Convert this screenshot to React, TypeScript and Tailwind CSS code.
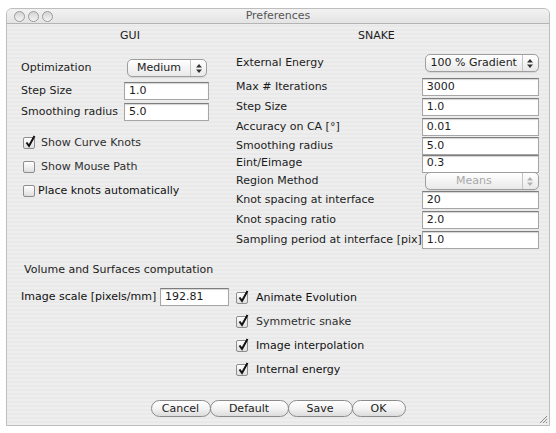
import React from "react";

const font = "font-['DejaVu_Sans','Liberation_Sans',sans-serif]";

function Arrows({ dim }: { dim?: boolean }) {
  const c = dim ? "#b0b0b0" : "#333";
  return (
    <svg width="6" height="9" viewBox="0 0 6 9">
      <path d="M3 0 L6 3.5 L0 3.5 Z" fill={c} />
      <path d="M3 9 L6 5.5 L0 5.5 Z" fill={c} />
    </svg>
  );
}

function Popup({ value, width, dim }: { value: string; width: string; dim?: boolean }) {
  return (
    <div
      className={`${width} h-[18px] flex items-center rounded-[5px] border border-[#9e9e9e] bg-gradient-to-b from-white to-[#e9e9e9] shadow-[0_1px_0_#d8d8d8]`}
    >
      <span className={`flex-1 text-center text-[11px] ${dim ? "text-[#a8a8a8]" : "text-[#1c1c1c]"}`}>{value}</span>
      <span className="w-[16px] h-full flex items-center justify-center border-l border-[#c4c4c4]">
        <Arrows dim={dim} />
      </span>
    </div>
  );
}

function Field({ value, width }: { value: string; width: string }) {
  return (
    <div
      className={`${width} h-[18px] shrink-0 flex items-center bg-white border border-[#a6a6a6] border-t-[#7d7d7d] pl-[4px] text-[11px] text-[#1c1c1c] shadow-[inset_0_1px_1px_#d4d4d4]`}
    >
      {value}
    </div>
  );
}

function Box({ checked }: { checked?: boolean }) {
  return (
    <span className="relative w-[12px] h-[12px] rounded-[2px] border border-[#8d8d8d] bg-gradient-to-b from-white to-[#dedede] shrink-0">
      {checked && (
        <svg className="absolute left-[1px] top-[-3px]" width="11" height="13" viewBox="0 0 11 13">
          <path d="M1.5 7.5 L4 11 L9.5 1" stroke="#111" strokeWidth="2" fill="none" />
        </svg>
      )}
    </span>
  );
}

function Check({ label, checked, gap, bold }: { label: string; checked?: boolean; gap: string; bold?: boolean }) {
  return (
    <div className={`h-[18px] flex items-center ${gap}`}>
      <Box checked={checked} />
      <span className={`text-[11px] ${bold ? "text-[#111]" : "text-[#2e2e2e]"}`}>{label}</span>
    </div>
  );
}

function Row({ label, children, className }: { label: string; children: React.ReactNode; className?: string }) {
  return (
    <div className={`flex items-center justify-between ${className ?? ""}`}>
      <span className="text-[11px] text-[#1c1c1c] whitespace-nowrap">{label}</span>
      {children}
    </div>
  );
}

// label, value, row height
const snakeRows: [string, string, string][] = [
  ["Max # Iterations", "3000", "h-[20px]"],
  ["Step Size", "1.0", "h-[20px]"],
  ["Accuracy on CA [°]", "0.01", "h-[20px]"],
  ["Smoothing radius", "5.0", "h-[18px]"],
  ["Eint/Eimage", "0.3", "h-[17px]"],
];

const knotRows: [string, string][] = [
  ["Knot spacing at interface", "20"],
  ["Knot spacing ratio", "2.0"],
  ["Sampling period at interface [pix]", "1.0"],
];

export default function App() {
  return (
    <div className={`w-[556px] h-[433px] bg-white pt-[8px] pl-[6px] ${font}`}>
      <div className="relative w-[544px] h-[418px] flex flex-col border border-[#bdbdbd] rounded-t-[6px] overflow-hidden bg-[repeating-linear-gradient(0deg,#eeeeee_0px,#eeeeee_2px,#e9e9e9_2px,#e9e9e9_4px)]">
        {/* title bar */}
        <div className="relative h-[15px] flex items-center justify-center bg-gradient-to-b from-[#f2f2f2] to-[#e4e4e4] border-b border-[#b4b4b4]">
          <div className="absolute left-[7px] top-[2px] flex gap-[3px]">
            {[0, 1, 2].map((i) => (
              <span
                key={i}
                className="w-[11px] h-[11px] rounded-full border border-[#9a9a9a] bg-gradient-to-b from-[#d4d4d4] to-[#f4f4f4]"
              />
            ))}
          </div>
          <span className="text-[11px] text-[#555]">Preferences</span>
        </div>

        {/* top section */}
        <div className="grid grid-cols-[222px_1fr]">
          <div className="flex flex-col pl-[14px]">
            <div className="h-[24px] flex items-center justify-center pl-[10px] text-[11px] text-[#1c1c1c]">GUI</div>
            <Row label="Optimization" className="mt-[11px] h-[18px] pr-[22px]">
              <Popup value="Medium" width="w-[80px]" />
            </Row>
            <div className="mt-[5px] h-[18px] flex items-center">
              <span className="w-[103px] text-[11px] text-[#1c1c1c]">Step Size</span>
              <Field value="1.0" width="w-[85px]" />
            </div>
            <div className="mt-[3px] h-[18px] flex items-center">
              <span className="w-[103px] text-[11px] text-[#1c1c1c]">Smoothing radius</span>
              <Field value="5.0" width="w-[85px]" />
            </div>
            <div className="mt-[13px] flex flex-col gap-[6px] pl-[2px]">
              <Check label="Show Curve Knots" checked gap="gap-[6px]" />
              <Check label="Show Mouse Path" gap="gap-[6px]" />
              <Check label="Place knots automatically" gap="gap-[3px]" bold />
            </div>
          </div>

          <div className="flex flex-col pl-[7px] pr-[12px]">
            <div className="h-[24px] flex items-center justify-center pr-[22px] text-[11px] text-[#1c1c1c]">SNAKE</div>
            <Row label="External Energy" className="mt-[6px] h-[18px]">
              <Popup value="100 % Gradient" width="w-[114px]" />
            </Row>
            <div className="mt-[5px] flex flex-col">
              {snakeRows.map(([l, v, h]) => (
                <Row key={l} label={l} className={h}>
                  <Field value={v} width="w-[117px]" />
                </Row>
              ))}
              <Row label="Region Method" className="h-[18px]">
                <Popup value="Means" width="w-[114px]" dim />
              </Row>
              {knotRows.map(([l, v]) => (
                <Row key={l} label={l} className="h-[20px]">
                  <Field value={v} width="w-[117px]" />
                </Row>
              ))}
            </div>
          </div>
        </div>

        {/* bottom section */}
        <div className="grid grid-cols-[222px_1fr]">
          <div className="flex flex-col pl-[14px]">
            <div className="mt-[12px] h-[16px] flex items-center pl-[3px] text-[11px] text-[#1c1c1c]">
              Volume and Surfaces computation
            </div>
            <div className="mt-[10px] h-[18px] flex items-center">
              <span className="w-[139px] text-[11px] text-[#111]">Image scale [pixels/mm]</span>
              <Field value="192.81" width="w-[69px]" />
            </div>
          </div>
          <div className="flex flex-col pl-[7px] mt-[39px] gap-[6px]">
            <Check label="Animate Evolution" checked gap="gap-[8px]" bold />
            <Check label="Symmetric snake" checked gap="gap-[8px]" />
            <Check label="Image interpolation" checked gap="gap-[8px]" bold />
            <Check label="Internal energy" checked gap="gap-[8px]" bold />
          </div>
        </div>

        {/* buttons */}
        <div className="mt-[21px] flex justify-center">
          {[
            ["Cancel", "w-[60px]"],
            ["Default", "w-[79px]"],
            ["Save", "w-[65px]"],
            ["OK", "w-[54px]"],
          ].map(([t, w], i) => (
            <button
              key={t}
              className={`${w} ${i ? "-ml-[1px]" : ""} h-[17px] rounded-full border border-[#8c8c8c] bg-gradient-to-b from-white via-[#f3f3f3] to-[#dcdcdc] text-[11px] text-[#1c1c1c] leading-none`}
            >
              {t}
            </button>
          ))}
        </div>

        {/* resize grip */}
        <svg className="absolute right-[1px] bottom-[1px]" width="10" height="10" viewBox="0 0 10 10">
          <path d="M9 2 L2 9 M9 5 L5 9 M9 8 L8 9" stroke="#8a8a8a" strokeWidth="1" />
        </svg>
      </div>
    </div>
  );
}
